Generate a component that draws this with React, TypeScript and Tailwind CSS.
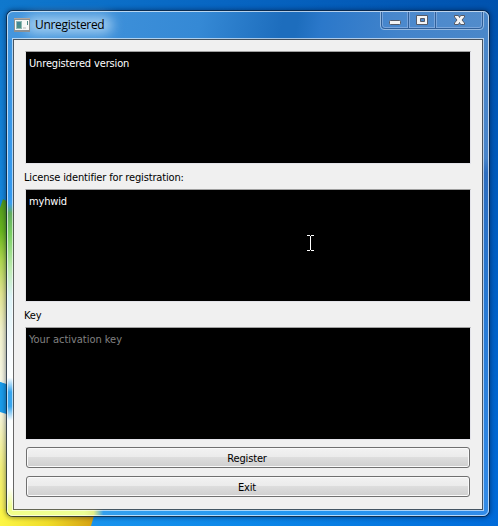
import React from "react";

const uiFont = "font-['DejaVu_Sans_Condensed','DejaVu_Sans',sans-serif] [font-stretch:condensed]";

function Wallpaper() {
  return (
    <svg className="absolute inset-0" width="498" height="526" viewBox="0 0 498 526">
      <defs>
        <linearGradient id="sky" x1="0" y1="0" x2="1" y2="0">
          <stop offset="0" stopColor="#1078cd" />
          <stop offset=".45" stopColor="#0865c2" />
          <stop offset="1" stopColor="#0052ae" />
        </linearGradient>
        <linearGradient id="low" x1="0" y1="0" x2="1" y2="0">
          <stop offset="0" stopColor="#209cf0" />
          <stop offset=".5" stopColor="#0c87e8" />
          <stop offset="1" stopColor="#006bd9" />
        </linearGradient>
        <linearGradient id="fade" x1="0" y1="0" x2="0" y2="1">
          <stop offset="0" stopColor="#000" />
          <stop offset="1" stopColor="#fff" />
        </linearGradient>
        <mask id="down"><rect width="498" height="526" fill="url(#fade)" /></mask>
        <linearGradient id="leaf" x1="0" y1="0" x2="0" y2="1">
          <stop offset="0" stopColor="#4f961d" />
          <stop offset=".17" stopColor="#68b51d" />
          <stop offset=".32" stopColor="#add64d" />
          <stop offset=".5" stopColor="#e1e590" />
          <stop offset=".7" stopColor="#f1f2cd" />
          <stop offset="1" stopColor="#f7f7e7" />
        </linearGradient>
        <linearGradient id="petal" x1="0" y1="0" x2="0" y2="1">
          <stop offset="0" stopColor="#f5f5df" />
          <stop offset=".5" stopColor="#f1ee77" />
          <stop offset="1" stopColor="#fbf348" />
        </linearGradient>
        <linearGradient id="gold" x1="0" y1="0" x2="96" y2="0" gradientUnits="userSpaceOnUse">
          <stop offset="0" stopColor="#fcf646" />
          <stop offset=".5" stopColor="#efdc29" />
          <stop offset="1" stopColor="#d39d10" />
        </linearGradient>
      </defs>
      <rect width="498" height="526" fill="url(#sky)" />
      <rect width="498" height="526" fill="url(#low)" mask="url(#down)" />
      <path d="M0 208L3 199L13 205V388L0 382Z" fill="url(#leaf)" />
      <path d="M0 382L13 386V416L0 412Z" fill="#1a9ce9" />
      <path d="M0 412L13 416V526H0Z" fill="url(#petal)" />
      <path d="M0 509H96L91 526H0Z" fill="url(#gold)" />
    </svg>
  );
}

function AppIcon() {
  return (
    <svg width="16" height="14" viewBox="0 0 16 14" shapeRendering="crispEdges">
      <rect width="16" height="14" fill="#8c9093" />
      <rect x="1" y="2" width="14" height="10" fill="#f7f7f7" />
      <rect y="0" width="16" height="1" fill="#b0a7a0" />
      <rect x="2" y="3" width="6" height="8" fill="#92b9b5" />
      <rect x="3" y="4" width="4" height="6" fill="#4b8e86" />
      <rect x="3" y="4" width="3" height="3" fill="#438798" />
      <rect x="9" y="9" width="3" height="2" fill="#d7d7d7" />
      <rect x="13" y="3" width="1" height="4" fill="#4d8987" />
    </svg>
  );
}

function CaptionButtons() {
  return (
    <svg className="absolute left-[372px] top-[-1px]" width="106" height="21" viewBox="0 0 106 21">
      <path d="M1.5 2V16Q1.5 19.5 5 19.5H101Q104.500 19.5 104.500 16V2" fill="none" stroke="#94b9e1" />
      <path d="M2.500 2V15Q2.500 18.500 6 18.500H100Q103.500 18.500 103.500 15V2" fill="#ffffff0c" stroke="#305f98" />
      <path d="M3.500 2V15Q3.500 17.500 6 17.500H100Q102.500 17.500 102.500 15V2M28.500 2V18M30.500 2V18M55.500 2V18M57.500 2V18" fill="none" stroke="#87ade0" strokeOpacity=".75" />
      <path d="M29.500 2V18M56.500 2V18" stroke="#305f98" />
      <rect x="10.500" y="10.500" width="11" height="4" rx="1" fill="#f4f4f4" stroke="#555b69" />
      <path d="M37.500 5.500H48.500V14.500H37.500Z M41.500 8.500V11.500H45.500V8.500Z" fill="#f4f4f4" fillRule="evenodd" stroke="#555b69" />
      <path d="M75.500 5.500H79.500L80.500 7.500L81.500 5.500H85.500V7L83 10L85.500 13V14.500H81.500L80.500 12.500L79.500 14.500H75.500V13L78 10L75.500 7Z" fill="#f4f4f4" stroke="#555b69" />
    </svg>
  );
}

function TextBox({ children, muted = false }: { children: React.ReactNode; muted?: boolean }) {
  return (
    <div className={`ml-[11px] h-[113px] w-[446px] border border-t-[#a0a0a0] border-l-[#e3e3e3] border-r-[#e3e3e9] border-b-[#e3e3e9] bg-black pl-[3px] pt-[5px] text-[11px] leading-[14px] ${muted ? "tracking-[-0.03px] text-[#808080]" : "text-white"}`}>
      {children}
    </div>
  );
}

function PushButton({ children, className }: { children: React.ReactNode; className: string }) {
  return (
    <button className={`ml-[12px] flex h-[21px] w-[444px] items-center justify-center rounded-[3px] border border-[#707070] bg-[linear-gradient(#f2f2f2_0%,#ebebeb_48%,#dddddd_50%,#cfcfcf_100%)] pr-[2px] pt-[2px] text-[11px] leading-[14px] text-black shadow-[inset_0_0_0_1px_#fafafa] ${className}`}>
      {children}
    </button>
  );
}

export default function App() {
  return (
    <div className={`relative h-[526px] w-[498px] overflow-hidden pl-[6px] pt-[10px] ${uiFont}`}>
      <Wallpaper />
      <main className="relative h-[507px] w-[484px] rounded-[7px] border border-[#0c1c30b0] bg-[#2f82d8] bg-clip-padding shadow-[0_0_4px_1px_#00102a66]">
        <div className="absolute inset-0 overflow-hidden rounded-[6px]">
          <div className="h-[29px] bg-[linear-gradient(100deg,#4697de_0%,#3589d5_40%,#1d6dbd_57%,#1d6dbd_60%,#2b78ca_65%,#4384cb_82%,#4a87c9_100%)]" />
          <div className="absolute left-0 top-[28px] h-[477px] w-[7px] bg-[linear-gradient(#3d94df_0%,#349af0_33%,#3c9ff0_34.5%,#62ad60_36.5%,#7bd064_41%,#bdecb0_48%,#dcf3f8_54%,#f6fbff_65%,#fcffff_71%,#36a5ee_74%,#36a5ee_77%,#fcffff_80%,#fff_94%,#efff95_98%)]" />
          <div className="absolute right-0 top-[28px] h-[477px] w-[7px] bg-[linear-gradient(#4a87c9_0%,#4884ca_25%,#2c6dbf_28%,#2779d3_55%,#318be8_100%)]" />
          <div className="absolute bottom-0 left-0 h-[7px] w-full bg-[linear-gradient(90deg,#f2ff8b_0%,#edff96_16%,#e4ee88_18%,#34a0ee_20%,#2297f2_60%,#318be8_100%)]" />
        </div>
        <div className="pointer-events-none absolute inset-0 rounded-[6px] border border-white/65" />
        <header className="relative flex h-[28px] items-center pl-[7px]">
          <div className="absolute left-[18px] top-[5px] h-[18px] w-[88px] rounded-full bg-[#c5e2f8]/70 blur-[6px]" />
          <div className="relative mt-[-1px]"><AppIcon /></div>
          <span className="relative ml-[5px] mt-[-1px] font-['Open_Sans','Noto_Sans',sans-serif] text-[12px] leading-[16px] tracking-[-0.3px] text-black [font-stretch:normal]">Unregistered</span>
          <CaptionButtons />
        </header>
        <section className="relative ml-[6px] h-[471px] w-[470px] border border-black/60 bg-[#f0f0f0] bg-clip-padding pt-[11px] tracking-[-0.15px] shadow-[0_0_0_1px_#ffffff99]">
          <TextBox>Unregistered version</TextBox>
          <div className="flex h-[25px] items-center pl-[10px] pt-[2px] text-[11px] leading-[14px]">License identifier for registration:</div>
          <TextBox>myhwid</TextBox>
          <div className="flex h-[25px] items-center pl-[10px] pt-[2px] text-[11px] leading-[14px]">Key</div>
          <TextBox muted>Your activation key</TextBox>
          <PushButton className="mt-[7px]">Register</PushButton>
          <PushButton className="mt-[8px]">Exit</PushButton>
        </section>
      </main>
      <svg className="absolute left-[307px] top-[235px]" width="7" height="16" viewBox="0 0 7 16" shapeRendering="crispEdges">
        <path d="M0 .5H3M4 .5H7M3.500 1V15M0 15.500H3M4 15.500H7" fill="none" stroke="#fff" />
      </svg>
    </div>
  );
}
